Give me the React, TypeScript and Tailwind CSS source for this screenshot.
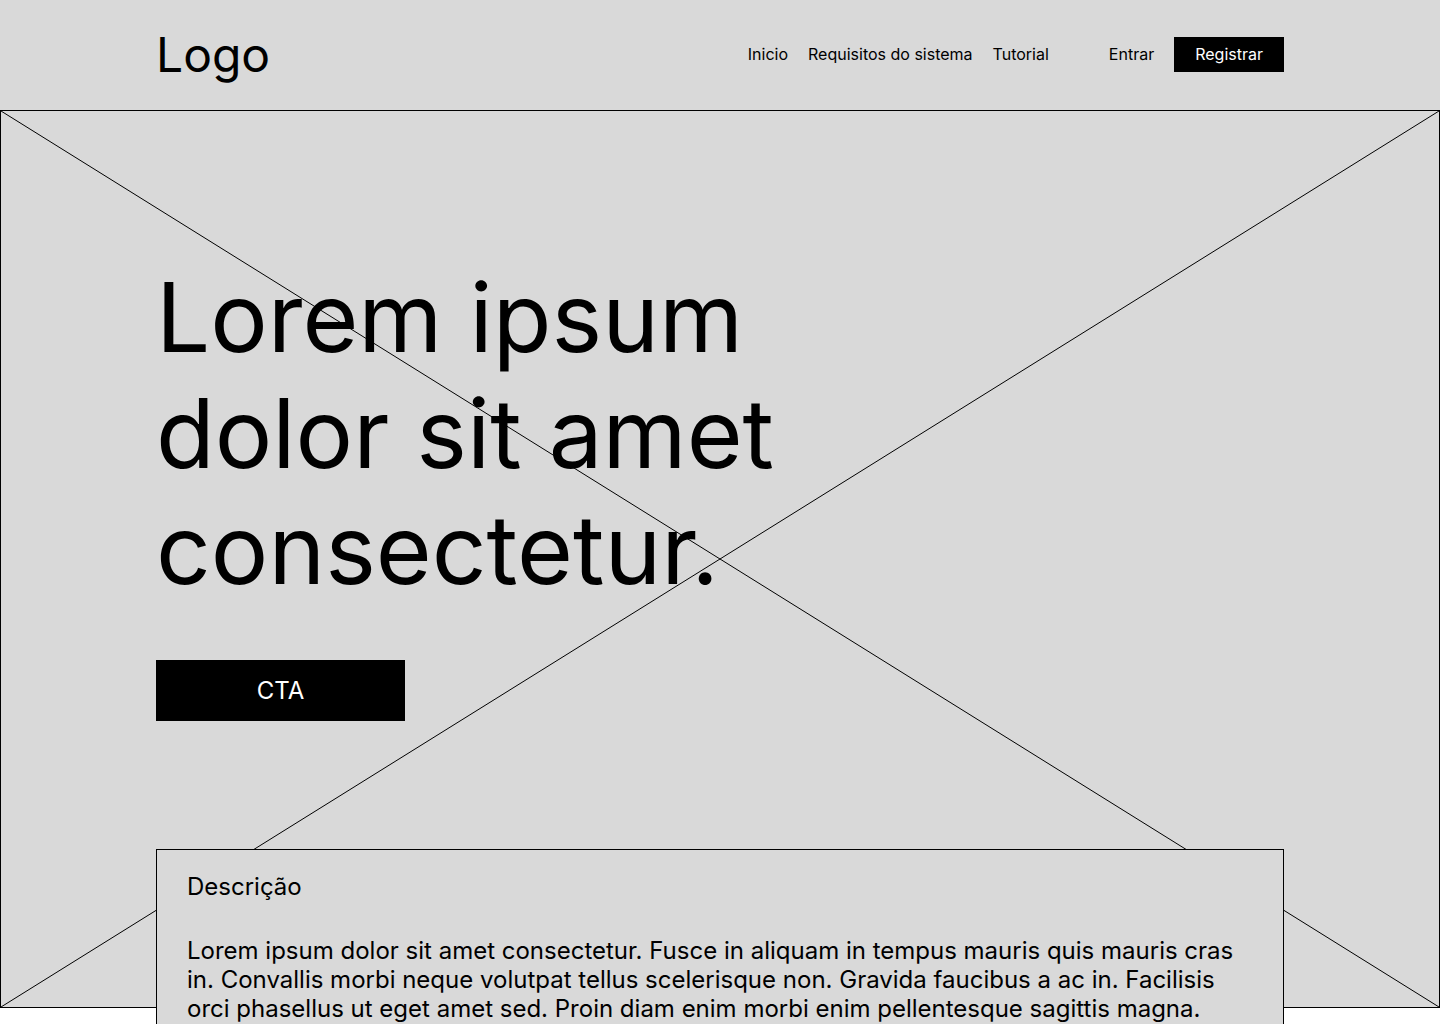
import React from 'react';

const navLinks = ['Inicio', 'Requisitos do sistema', 'Tutorial'];

export default function App() {
  return (
    <div className="min-h-screen bg-white text-black font-['Inter',sans-serif] overflow-hidden">
      {/* Header */}
      <header className="bg-[#d9d9d9] h-[110px]">
        <div className="max-w-[1128px] mx-auto h-full flex items-center justify-between">
          <a className="text-[48px] leading-[58px] -mt-[1px]">Logo</a>
          <div className="flex items-center gap-[60px] text-[16px] leading-[19px] -mt-[2px]">
            <nav className="flex items-center gap-5">
              {navLinks.map((link) => (
                <a key={link} className="cursor-pointer">{link}</a>
              ))}
            </nav>
            <div className="flex items-center gap-5">
              <a className="cursor-pointer">Entrar</a>
              <button className="bg-black text-white px-[21px] py-2 leading-[19px]">Registrar</button>
            </div>
          </div>
        </div>
      </header>

      {/* Hero */}
      <section className="relative h-[898px] bg-[#d9d9d9] border border-black">
        <svg
          className="absolute inset-0 w-full h-full"
          viewBox="0 0 100 100"
          preserveAspectRatio="none"
        >
          <line x1="0" y1="0" x2="100" y2="100" stroke="black" strokeWidth="1" vectorEffect="non-scaling-stroke" />
          <line x1="100" y1="0" x2="0" y2="100" stroke="black" strokeWidth="1" vectorEffect="non-scaling-stroke" />
        </svg>
        <div className="relative max-w-[1128px] mx-auto pt-[148px]">
          <h1 className="text-[96px] leading-[116px] font-normal w-[720px]">
            Lorem ipsum dolor sit amet consectetur.
          </h1>
          <button className="mt-[53px] w-[249px] h-[61px] bg-black text-white text-[24px] leading-[29px]">CTA</button>
        </div>
      </section>

      {/* Description */}
      <div className="relative max-w-[1128px] mx-auto -mt-[159px]">
        <div className="bg-[#d9d9d9] border border-black px-[30px] pt-[22px] pb-10">
          <h2 className="text-[24px] leading-[29px]">Descrição</h2>
          <p className="mt-[35px] text-[24px] leading-[29px]">
            Lorem ipsum dolor sit amet consectetur. Fusce in aliquam in tempus mauris quis mauris cras in. Convallis
            morbi neque volutpat tellus scelerisque non. Gravida faucibus a ac in. Facilisis orci phasellus ut eget amet
            sed. Proin diam enim morbi enim pellentesque sagittis magna.
          </p>
        </div>
      </div>
    </div>
  );
}
